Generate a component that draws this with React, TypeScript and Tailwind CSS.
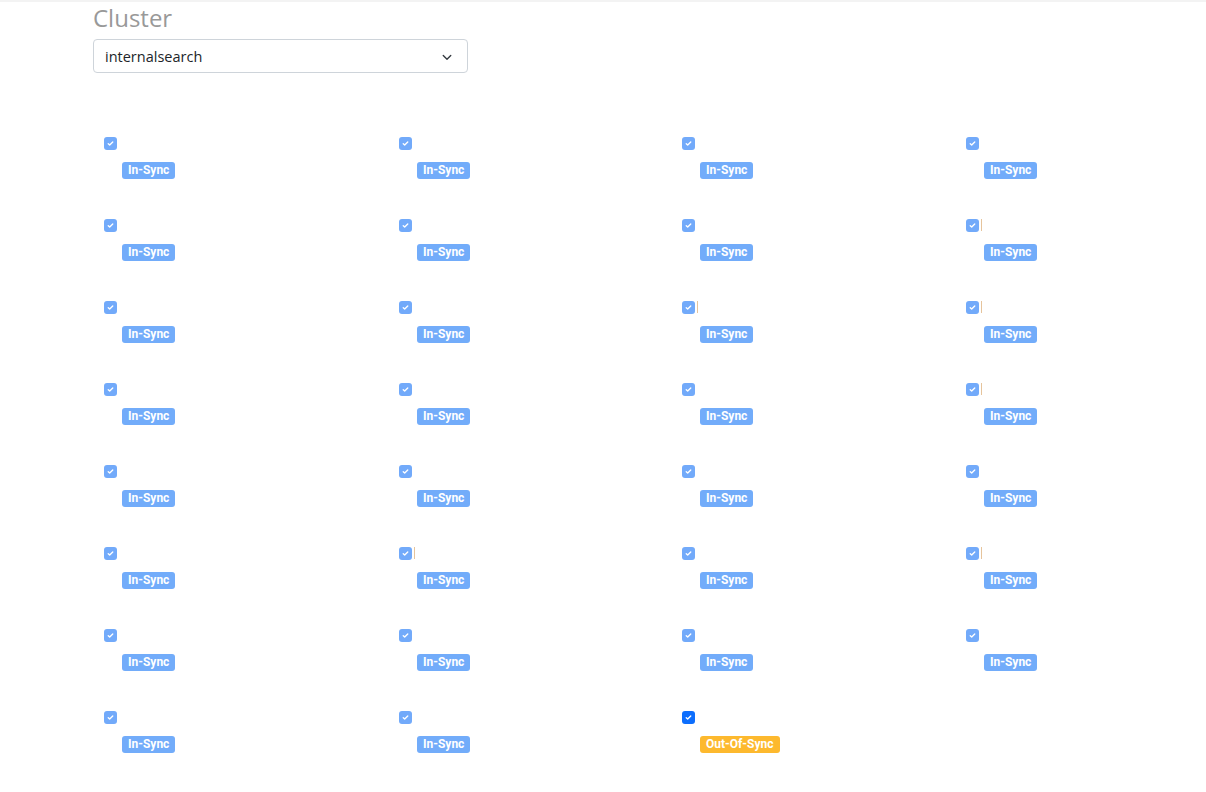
import React from 'react';

type Item = { sync: 'in' | 'out'; mark?: boolean };

// 8 rows x 4 columns, last row has 3 entries
const ITEMS: Item[] = [
  { sync: 'in' }, { sync: 'in' }, { sync: 'in' }, { sync: 'in' },
  { sync: 'in' }, { sync: 'in' }, { sync: 'in' }, { sync: 'in', mark: true },
  { sync: 'in' }, { sync: 'in' }, { sync: 'in', mark: true }, { sync: 'in', mark: true },
  { sync: 'in' }, { sync: 'in' }, { sync: 'in' }, { sync: 'in', mark: true },
  { sync: 'in' }, { sync: 'in' }, { sync: 'in' }, { sync: 'in' },
  { sync: 'in' }, { sync: 'in', mark: true }, { sync: 'in' }, { sync: 'in', mark: true },
  { sync: 'in' }, { sync: 'in' }, { sync: 'in' }, { sync: 'in' },
  { sync: 'in' }, { sync: 'in' }, { sync: 'out' },
];

function Check({ active }: { active: boolean }) {
  return (
    <span
      className={
        'w-[13px] h-[13px] rounded-[3px] flex items-center justify-center ' +
        (active ? 'bg-[#0d6efd]' : 'bg-[#72aafa]')
      }
    >
      <svg width="9" height="9" viewBox="0 0 20 20" fill="none">
        <path d="M5 10.5l3.2 3L15 6.5" stroke="white" strokeWidth="3" strokeLinecap="round" strokeLinejoin="round" />
      </svg>
    </span>
  );
}

function Cell({ item }: { item: Item }) {
  const out = item.sync === 'out';
  return (
    <div className="h-[82px] pl-[11px]">
      <div className="flex items-center h-5">
        <Check active={out} />
        {item.mark && <span className="ml-[2px] w-px h-3 bg-[#e6c49c]" />}
      </div>
      <div className="mt-[9px] pl-[18px] flex" style={{ fontFamily: 'Roboto, sans-serif' }}>
        {out ? (
          <span className="h-[17px] px-[6px] rounded-[3px] bg-[#fdb92e] text-white text-[12px] font-bold leading-[17px]">
            Out-Of-Sync
          </span>
        ) : (
          <span className="h-[17px] px-[6px] rounded-[3px] bg-[#72acfa] text-white text-[12px] font-bold leading-[17px]">
            In-Sync
          </span>
        )}
      </div>
    </div>
  );
}

export default function App() {
  return (
    <div className="min-h-[792px] bg-white" style={{ fontFamily: '"Open Sans", "Noto Sans", sans-serif' }}>
      <div className="h-[2px] bg-[#f3f3f3]" />
      <div className="pl-[93px]">
        <h2 className="text-[24px] leading-[32px] text-[#999999] font-normal">Cluster</h2>
        <div className="mt-[5px] w-[375px] h-[34px] border border-[#ced4da] rounded-[4px] flex items-center justify-between pl-[11px] pr-[14px] pt-[2px]">
          <span className="text-[14.5px] text-[#212529]">internalsearch</span>
          <svg width="12" height="12" viewBox="0 0 16 16" fill="none">
            <path d="M3 6l5 5 5-5" stroke="#343a40" strokeWidth="1.8" strokeLinecap="round" strokeLinejoin="round" />
          </svg>
        </div>
        <div className="mt-[60px] grid grid-cols-[295px_283px_284px_1fr]">
          {ITEMS.map((it, i) => (
            <Cell key={i} item={it} />
          ))}
        </div>
      </div>
    </div>
  );
}
